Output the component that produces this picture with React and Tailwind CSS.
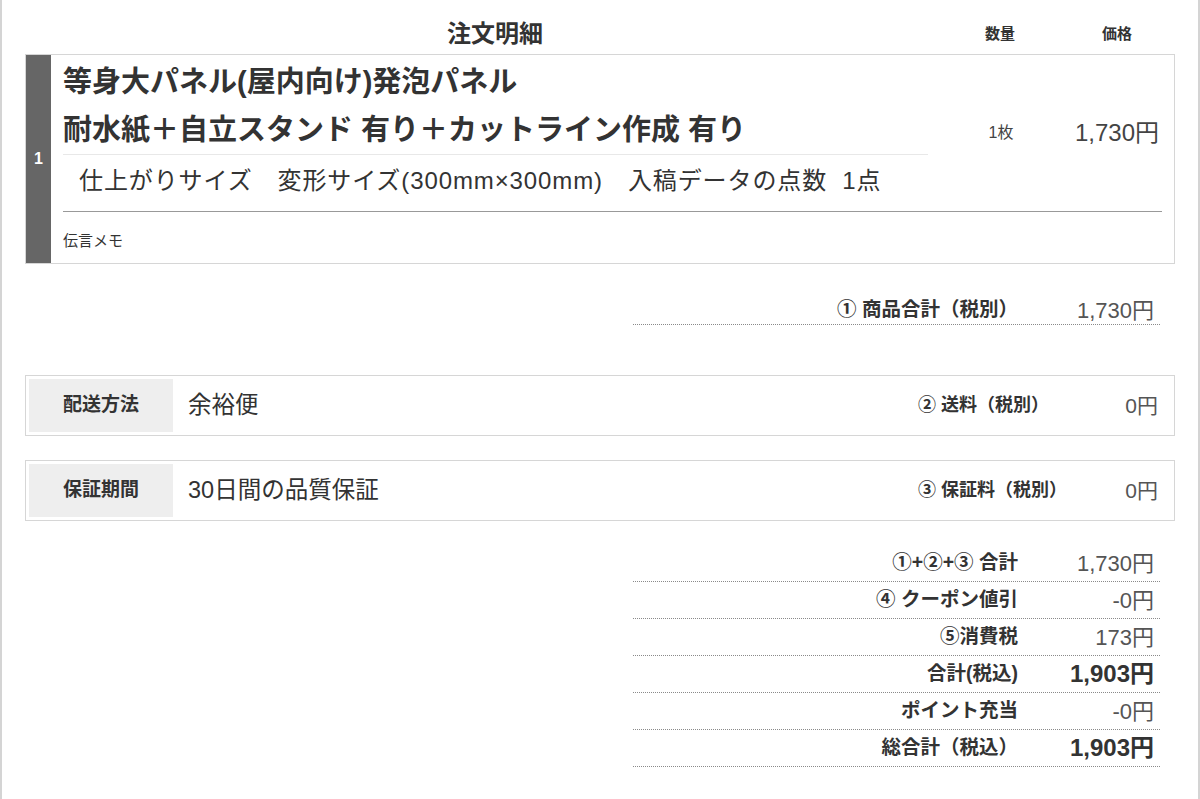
import React from "react";

const font = "font-['Liberation_Sans','Noto_Sans_CJK_JP',sans-serif]";

function TotalRow({ label, value, bold, extraTop }) {
  return (
    <div
      className={
        (extraTop ? "h-[37px] pt-[8px] " : "h-[37px] ") +
        "flex items-center border-b border-dotted border-[#8a8a8a]"
      }
    >
      <div className="flex-1 text-right text-[19.5px] font-bold text-[#333] pr-[6px]">{label}</div>
      <div
        className={
          bold
            ? "w-[136px] pr-[6px] text-right text-[24px] font-bold text-[#333]"
            : "w-[136px] pr-[6px] text-right text-[22px] text-[#555]"
        }
      >
        {value}
      </div>
    </div>
  );
}

function InfoBox({ label, value, feeLabel, fee }) {
  return (
    <div className="flex h-[61px] items-stretch border border-[#d6d6d6] p-[3px]">
      <div className="flex w-[144px] items-center justify-center bg-[#eeeeee] text-[19px] font-bold text-[#333]">
        {label}
      </div>
      <div className="flex flex-1 items-center pl-[15px] text-[23.5px] text-[#333]">{value}</div>
      <div className="flex w-[173px] items-center text-[18px] font-bold text-[#333]">{feeLabel}</div>
      <div className="flex w-[80px] items-center justify-end pr-[13px] text-[21px] text-[#555]">{fee}</div>
    </div>
  );
}

export default function App() {
  return (
    <div className={`${font} min-h-[799px] w-full bg-white text-[#333]`}>
      <div className="min-h-[799px] border-x-2 border-[#d4d4d4] px-[23px] pb-[30px]">
        {/* header */}
        <div className="flex h-[54px] items-center pt-[14px]">
          <div className="w-[940px] text-center text-[24px] font-bold">注文明細</div>
          <div className="w-[70px] text-center text-[15px] font-bold">数量</div>
          <div className="ml-[32px] w-[100px] text-center text-[15px] font-bold">価格</div>
        </div>

        {/* item */}
        <div className="flex border border-[#d6d6d6]">
          <div className="flex w-[25px] items-center justify-center bg-[#666] text-[16px] font-bold text-white">1</div>
          <div className="mx-[12px] flex flex-1 flex-col">
            <div className="flex border-b border-[#999]">
              <div className="w-[865px]">
                <div className="border-b border-[#e8e8e8] pt-[3px] text-[29px] font-bold leading-[48px]">
                  <div>等身大パネル(屋内向け)発泡パネル</div>
                  <div>耐水紙＋自立スタンド 有り＋カットライン作成 有り</div>
                </div>
                <div className="pb-[10px] pl-[16px] pt-[6px] text-[24px] leading-[40px] tracking-[0.9px]">
                  仕上がりサイズ　変形サイズ(300mm×300mm)　入稿データの点数&nbsp;&nbsp;1点
                </div>
              </div>
              <div className="flex flex-1 items-center justify-center pl-[12px] text-[16px] text-[#444]">1枚</div>
              <div className="flex w-[100px] items-center justify-end pr-[3px] text-[24px] text-[#444]">1,730円</div>
            </div>
            <div className="pb-[12px] pt-[19px] text-[15px] leading-[20px]">伝言メモ</div>
          </div>
        </div>

        {/* subtotal */}
        <div className="ml-auto mr-[15px] mt-[24px] w-[527px]">
          <TotalRow label="① 商品合計（税別）" value="1,730円" extraTop />
        </div>

        {/* delivery / warranty */}
        <div className="mt-[50px] flex flex-col gap-[24px]">
          <InfoBox label="配送方法" value="余裕便" feeLabel="② 送料（税別）" fee="0円" />
          <InfoBox label="保証期間" value="30日間の品質保証" feeLabel="③ 保証料（税別）" fee="0円" />
        </div>

        {/* totals */}
        <div className="ml-auto mr-[15px] mt-[24px] w-[527px]">
          <TotalRow label="①+②+③ 合計" value="1,730円" />
          <TotalRow label="④ クーポン値引" value="-0円" />
          <TotalRow label="⑤消費税" value="173円" />
          <TotalRow label="合計(税込)" value="1,903円" bold />
          <TotalRow label="ポイント充当" value="-0円" />
          <TotalRow label="総合計（税込）" value="1,903円" bold />
        </div>
      </div>
    </div>
  );
}
